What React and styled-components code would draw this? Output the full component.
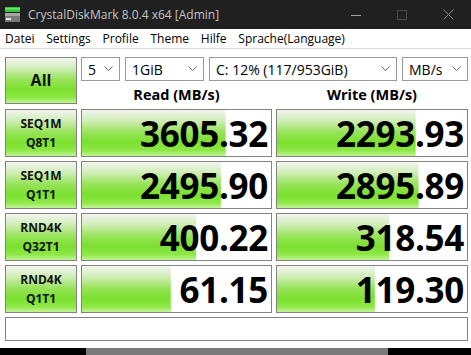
import React from "react"
import styled, { createGlobalStyle } from "styled-components"

const GlobalStyle = createGlobalStyle`
  html, body {
    margin: 0;
    padding: 0;
    background: #000;
  }
  body {
    font-family: "Open Sans", "Noto Sans", sans-serif;
  }
`

const green = `linear-gradient(to bottom, #f3f5f0 0%, #d2eebb 22%, #98e35a 48%, #7be02e 70%, #8ee848 88%, #c2f496 100%)`

const Window = styled.div`
  width: 471px;
  height: 348px;
  background: #fff;
  display: flex;
  flex-direction: column;
`

const TitleBar = styled.div`
  height: 29px;
  background: #202020;
  display: flex;
  align-items: center;
  padding-left: 5px;
  color: #c4c4c4;
  font-family: "Open Sans", sans-serif;
  font-size: 12px;
`

const TitleText = styled.span`
  margin-left: 8px;
  flex: 1;
`

const WinButton = styled.div`
  width: 46px;
  height: 29px;
  display: flex;
  align-items: center;
  justify-content: center;
`

const MenuBar = styled.div`
  height: 19px;
  display: flex;
  align-items: center;
  gap: 11.8px;
  padding-left: 5px;
  border-bottom: 1px solid #dadada;
  font-size: 12px;
  color: #000;
`

const Content = styled.div`
  padding: 8px 3px 0 5px;
  display: grid;
  grid-template-columns: 72px 191px 192px;
  column-gap: 4px;
  row-gap: 4px;
`

const Top = styled.div`
  grid-column: 2 / 4;
  display: flex;
  flex-direction: column;
  height: 48px;
`

const Combos = styled.div`
  display: flex;
  gap: 5px;
  margin-bottom: 5px;
`

const Combo = styled.div`
  width: ${(p) => p.w}px;
  height: 24px;
  box-sizing: border-box;
  border: 1px solid #9a9a9a;
  display: flex;
  align-items: center;
  padding: 0 6px;
  font-size: 14px;
  color: #000;
  span {
    flex: 1;
    white-space: nowrap;
  }
`

const Headers = styled.div`
  display: grid;
  grid-template-columns: 191px 192px;
  column-gap: 4px;
`

const Header = styled.div`
  text-align: center;
  font-weight: 700;
  font-size: 14.5px;
  line-height: 18px;
`

const GreenButton = styled.div`
  box-sizing: border-box;
  height: ${(p) => p.h || 48}px;
  border: 1px solid #838383;
  background: ${green};
  display: flex;
  flex-direction: column;
  align-items: center;
  justify-content: center;
  font-weight: 700;
  font-size: ${(p) => (p.big ? 16 : 12)}px;
  line-height: 19px;
  color: #111;
`

const Result = styled.div`
  box-sizing: border-box;
  height: 48px;
  border: 1px solid #838383;
  background-color: #fff;
  background-image: ${green};
  background-repeat: no-repeat;
  display: flex;
  align-items: center;
  justify-content: flex-end;
  padding-right: 3px;
  font-weight: 700;
  font-size: 35px;
  letter-spacing: -0.3px;
  color: #000;
`

const Comment = styled.div`
  grid-column: 1 / 4;
  height: 24px;
  box-sizing: border-box;
  border: 1px solid #838383;
`

const Taskbar = styled.div`
  height: 7px;
  background: #000;
  display: flex;
  padding-left: 86px;
`

const TaskThumb = styled.div`
  width: 302px;
  background: #7a7a7a;
`

const Chevron = () => (
  <svg width="9" height="6" viewBox="0 0 9 6">
    <polyline points="0.5,0.5 4.5,4.5 8.5,0.5" fill="none" stroke="#6a6a6a" strokeWidth="1" />
  </svg>
)

const AppIcon = () => (
  <svg width="15" height="15" viewBox="0 0 15 15">
    <rect x="0" y="0" width="15" height="5" fill="#34c734" />
    <rect x="0" y="1" width="15" height="1.5" fill="#6fe36f" />
    <rect x="0" y="6" width="15" height="9" fill="#7b7b7b" />
    <rect x="0" y="6" width="15" height="3" fill="#a6a6a6" />
    <rect x="1" y="11" width="5" height="2" fill="#e8e8e8" />
  </svg>
)

const rows = [
  { label: ["SEQ1M", "Q8T1"], read: "3605.32", rp: 76, write: "2293.93", wp: 73 },
  { label: ["SEQ1M", "Q1T1"], read: "2495.90", rp: 73.5, write: "2895.89", wp: 74.5 },
  { label: ["RND4K", "Q32T1"], read: "400.22", rp: 60.5, write: "318.54", wp: 59 },
  { label: ["RND4K", "Q1T1"], read: "61.15", rp: 47, write: "119.30", wp: 51.5 },
]

const menu = ["Datei", "Settings", "Profile", "Theme", "Hilfe", "Sprache(Language)"]

export default function App() {
  return (
    <>
      <GlobalStyle />
      <Window>
        <TitleBar>
          <AppIcon />
          <TitleText>CrystalDiskMark 8.0.4 x64 [Admin]</TitleText>
          <WinButton>
            <svg width="10" height="10" viewBox="0 0 10 10">
              <line x1="0" y1="5.5" x2="10" y2="5.5" stroke="#a0a0a0" strokeWidth="1" />
            </svg>
          </WinButton>
          <WinButton>
            <svg width="10" height="10" viewBox="0 0 10 10">
              <rect x="0.5" y="0.5" width="9" height="9" fill="none" stroke="#4a4a4a" strokeWidth="1" />
            </svg>
          </WinButton>
          <WinButton>
            <svg width="11" height="11" viewBox="0 0 11 11">
              <path d="M0.5 0.5 L10.5 10.5 M10.5 0.5 L0.5 10.5" stroke="#8a8a8a" strokeWidth="1" />
            </svg>
          </WinButton>
        </TitleBar>
        <MenuBar>
          {menu.map((m) => (
            <span key={m}>{m}</span>
          ))}
        </MenuBar>
        <Content>
          <GreenButton big h={47}>All</GreenButton>
          <Top>
            <Combos>
              <Combo w={39}>
                <span>5</span>
                <Chevron />
              </Combo>
              <Combo w={79}>
                <span>1GiB</span>
                <Chevron />
              </Combo>
              <Combo w={188}>
                <span>C: 12% (117/953GiB)</span>
                <Chevron />
              </Combo>
              <Combo w={66}>
                <span>MB/s</span>
                <Chevron />
              </Combo>
            </Combos>
            <Headers>
              <Header>Read (MB/s)</Header>
              <Header>Write (MB/s)</Header>
            </Headers>
          </Top>
          {rows.map((r) => (
            <React.Fragment key={r.label.join()}>
              <GreenButton>
                <span>{r.label[0]}</span>
                <span>{r.label[1]}</span>
              </GreenButton>
              <Result style={{ backgroundSize: `${r.rp}% 100%` }}>{r.read}</Result>
              <Result style={{ backgroundSize: `${r.wp}% 100%` }}>{r.write}</Result>
            </React.Fragment>
          ))}
          <Comment />
        </Content>
      </Window>
      <Taskbar>
        <TaskThumb />
      </Taskbar>
    </>
  )
}
